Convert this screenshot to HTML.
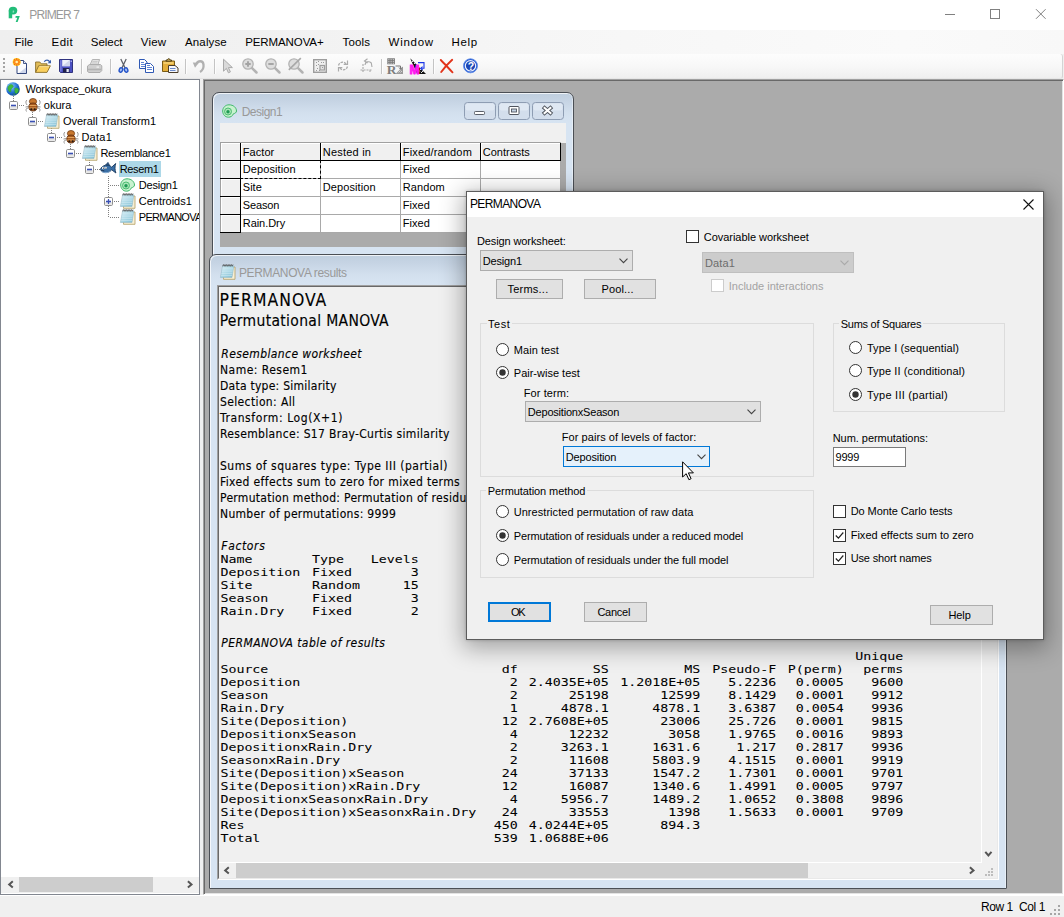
<!DOCTYPE html>
<html><head><meta charset="utf-8"><title>PRIMER 7</title>
<style>
html,body{margin:0;padding:0}
body{width:1064px;height:917px;position:relative;overflow:hidden;background:#f0f0f0;font-family:"Liberation Sans",sans-serif;font-size:12px;color:#000}
.a{position:absolute;white-space:pre;display:block}
svg{position:absolute;overflow:visible}
/* text classes: line-height fixed so baseline offsets are predictable */
.tt{font-size:12px;line-height:14px;letter-spacing:-.9px;color:#999}
.mn{font-size:11.5px;line-height:14px;letter-spacing:-.2px}
.tr{font-size:11px;line-height:13px;letter-spacing:-.23px}
.ct{font-size:12px;line-height:14px;letter-spacing:-.4px;color:#999}
.gd{font-size:11px;line-height:13px;letter-spacing:.1px}
.d{font-size:11px;line-height:13px;letter-spacing:-.13px}
.dt{font-size:12px;line-height:14px;letter-spacing:-.5px}
.h1{font-family:"DejaVu Sans Condensed","DejaVu Sans","Liberation Sans",sans-serif;font-size:17.4px;line-height:20px;letter-spacing:.9px}
.h2{font-family:"DejaVu Sans Condensed","DejaVu Sans","Liberation Sans",sans-serif;font-size:15.5px;line-height:18px;letter-spacing:.28px}
.b{font-family:"DejaVu Sans Condensed","DejaVu Sans","Liberation Sans",sans-serif;font-size:12px;line-height:16px;letter-spacing:.25px}
.i{font-style:italic}
.m{font-family:"DejaVu Sans Mono","Liberation Mono",monospace;font-size:13.29px;line-height:13px;transform-origin:0 11px;transform:scaleY(.73)}
.st{font-size:12px;line-height:14px;letter-spacing:-.45px}
.b,.h1,.h2{-webkit-text-stroke:.13px #000;font-stretch:condensed}
.m{-webkit-text-stroke:.07px #000}

</style></head><body>
<svg width="0" height="0" style="left:0;top:0"><defs><linearGradient id="np" x1="0" y1="0" x2="1" y2="1"><stop offset="0" stop-color="#d6eef5"/><stop offset=".55" stop-color="#a4d4e3"/><stop offset="1" stop-color="#7fbdd3"/></linearGradient></defs></svg>
<div class="a" style="left:0;top:0;width:1064px;height:30px;background:#fff"></div>
<svg style="left:8px;top:6px" width="13" height="17" viewBox="0 0 13 17"><ellipse cx="5" cy="4.600" rx="4.250" ry="3.950" fill="#22bd79"/><path d="M.7 4.500h3.500v7.800h-3.500z" fill="#22bd79"/><path d="M4.700 4.700c.9-.5 1.600-.1 1.500 .9-.1 .9-.8 1.300-1.500 1.200z" fill="#8fe0bd"/><path d="M7.700 10.100h4.100l-2.200 5.800h-1.900l1.600-4.100h-1.900z" fill="#22bd79"/></svg>
<span class="a tt" style="left:29.3px;top:8px;letter-spacing:-0.87px;">PRIMER 7</span>
<svg style="left:940px;top:4px" width="120" height="22" viewBox="0 0 120 22" fill="none" stroke="#808080" stroke-width="1"><path d="M5 10.500h10"/><rect x="50.500" y="5.500" width="9" height="9"/><path d="M96 5.200l9.600 9.600M105.600 5.200l-9.600 9.600"/></svg>
<div class="a" style="left:0;top:30px;width:1064px;height:24px;background:linear-gradient(90deg,#efefef 0,#f1f1f1 25%,#f6f6f6 50%,#fafafa 85%,#f8f8f8 100%)"></div>
<span class="a mn" style="left:14.6px;top:35px;letter-spacing:-0.01px;">File</span>
<span class="a mn" style="left:51.6px;top:35px;letter-spacing:0.39px;">Edit</span>
<span class="a mn" style="left:90.8px;top:35px;letter-spacing:-0.04px;">Select</span>
<span class="a mn" style="left:140.8px;top:35px;letter-spacing:0.18px;">View</span>
<span class="a mn" style="left:185.0px;top:35px;letter-spacing:0.14px;">Analyse</span>
<span class="a mn" style="left:245.2px;top:35px;letter-spacing:-0.10px;">PERMANOVA+</span>
<span class="a mn" style="left:342.6px;top:35px;letter-spacing:0.16px;">Tools</span>
<span class="a mn" style="left:388.6px;top:35px;letter-spacing:0.72px;">Window</span>
<span class="a mn" style="left:451.6px;top:35px;letter-spacing:0.61px;">Help</span>
<div class="a" style="left:0;top:54px;width:1062px;height:24px;background:linear-gradient(#fdfdfd,#f7f7f7 55%,#efefef);border-radius:0 3px 3px 0;border-bottom:1px solid #e6e6e6;border-right:1px solid #d4d4d4"></div>
<svg style="left:3px;top:58px" width="2" height="16"><rect x="0" y="0" width="2" height="2" fill="#a4a4a4"/><rect x="0" y="4" width="2" height="2" fill="#a4a4a4"/><rect x="0" y="8" width="2" height="2" fill="#a4a4a4"/><rect x="0" y="12" width="2" height="2" fill="#a4a4a4"/></svg>
<svg style="left:11px;top:58px" width="17" height="17" viewBox="0 0 17 17"><path d="M6 2.500h6.500l3 3v10h-9.500z" fill="#fcfdff" stroke="#33477d"/><path d="M12.500 2.500v3h3" fill="#e4e9f6" stroke="#33477d" stroke-width=".9"/><path d="M15 9.500v5.500h-7z" fill="#c3cde6" opacity=".8"/><circle cx="5.700" cy="4" r="4" fill="#ffc81e"/><circle cx="5.700" cy="4" r="2.700" fill="#ff8a1c"/><circle cx="5.700" cy="4" r="1.300" fill="#fff1a8"/><circle cx="8.80" cy="4.00" r=".55" fill="#e4421a"/><circle cx="7.90" cy="6.20" r=".55" fill="#e4421a"/><circle cx="5.70" cy="7.10" r=".55" fill="#e4421a"/><circle cx="3.50" cy="6.20" r=".55" fill="#e4421a"/><circle cx="2.60" cy="4.00" r=".55" fill="#e4421a"/><circle cx="3.50" cy="1.80" r=".55" fill="#e4421a"/><circle cx="5.70" cy="0.90" r=".55" fill="#e4421a"/><circle cx="7.90" cy="1.80" r=".55" fill="#e4421a"/></svg>
<svg style="left:35px;top:58px" width="16" height="16" viewBox="0 0 16 16"><path d="M.6 14.400v-10.400h4.200l1.400 1.800h5.800v2.400" fill="#e2bd58" stroke="#8a6f2c" stroke-width=".9"/><path d="M.6 14.400l3-6.600h11.800l-3.400 6.600z" fill="#f9cf5e" stroke="#8a6f2c" stroke-width=".9"/><path d="M4.300 8.600h9.800" stroke="#fde9a8" stroke-width=".8"/><path d="M9.300 3.800c1.300-2.300 4.300-2.300 5.400 .2" fill="none" stroke="#3b61ad" stroke-width="1.300"/><path d="M16 1.700v3.500h-3.300z" fill="#3b61ad"/></svg>
<svg style="left:59px;top:58px" width="14" height="16" viewBox="0 0 14 16"><path d="M.5 1.500h13v13h-12l-1-1z" fill="#4b50c2" stroke="#30337f"/><path d="M1.200 2.200h1.300v11.400h-1.300z" fill="#7f84e0"/><rect x="3.200" y="2" width="7.600" height="6.200" fill="#eef1fa"/><path d="M3.200 8.200l7.600-6.200v6.200z" fill="#cfd5ec"/><rect x="4" y="10" width="6.500" height="4.500" fill="#20224a"/><rect x="7.500" y="11" width="2.300" height="3" fill="#e6e8f6"/><rect x="11.700" y="2.600" width="1" height="1.300" fill="#dfe2ff"/></svg>
<div class="a" style="left:81px;top:59px;width:1px;height:15px;background:#c4c4c4"></div><div class="a" style="left:82px;top:59px;width:1px;height:15px;background:#fdfdfd"></div>
<svg style="left:86px;top:58px" width="17" height="16" viewBox="0 0 17 16"><path d="M4 7l2.400-5.500h7.200l-1.800 5.500z" fill="#e2e2e2" stroke="#b4b4b4"/><path d="M6.500 3.500h5M6 5h5" stroke="#c2c2c2" stroke-width=".7"/><path d="M1.500 8l2-1.500h11l1.300 1.300v4.700l-1.800 2h-11l-1.500-1z" fill="#cfcfcf" stroke="#adadad"/><path d="M2 11.500h13" stroke="#b2b2b2" stroke-width="1.600"/><rect x="10.500" y="8.500" width="2.500" height="1.200" fill="#f3f3f3"/></svg>
<div class="a" style="left:110px;top:59px;width:1px;height:15px;background:#c4c4c4"></div><div class="a" style="left:111px;top:59px;width:1px;height:15px;background:#fdfdfd"></div>
<svg style="left:117px;top:58px" width="13" height="16" viewBox="0 0 13 16"><path d="M3.800 1l4.300 9M9.200 1l-4.300 9" stroke="#5d6068" stroke-width="1.300" fill="none"/><ellipse cx="3.900" cy="12" rx="1.700" ry="2.200" transform="rotate(20 3.900 12)" fill="#a9c2f4" stroke="#2453c8" stroke-width="1.400"/><ellipse cx="9.100" cy="12" rx="1.700" ry="2.200" transform="rotate(-20 9.100 12)" fill="#a9c2f4" stroke="#2453c8" stroke-width="1.400"/></svg>
<svg style="left:139px;top:58px" width="16" height="16" viewBox="0 0 16 16"><path d="M.5 1.500h5l2.500 2.500v6.500h-7.500z" fill="#fff" stroke="#2f59b4"/><path d="M2 4.500h3M2 6.500h4.500M2 8.500h4.500" stroke="#5f85d4"/><path d="M6.500 5.500h5l3 3v6h-8z" fill="#fff" stroke="#2f59b4"/><path d="M8 9.500h5M8 11.500h5M8 7.500h3" stroke="#5f85d4"/></svg>
<svg style="left:162px;top:58px" width="17" height="16" viewBox="0 0 17 16"><path d="M.5 3h12v10.500h-12z" fill="#e3ae3a" stroke="#7a5c17"/><path d="M1.500 4h10v2h-10z" fill="#f6d377" opacity=".8"/><path d="M4 3.200v-1.200h1.500c0-1.800 2.500-1.800 2.500 0h1.500v1.200z" fill="#d7b75e" stroke="#4b3a12" stroke-width=".9"/><path d="M6.500 7.500h6.500l3 2.500v4.500h-9.500z" fill="#f5f7fc" stroke="#4a3d2a"/><path d="M8 10.500h5.500M8 12.500h5.500" stroke="#6a8acb"/></svg>
<div class="a" style="left:185px;top:59px;width:1px;height:15px;background:#c4c4c4"></div><div class="a" style="left:186px;top:59px;width:1px;height:15px;background:#fdfdfd"></div>
<svg style="left:192px;top:58px" width="13" height="15" viewBox="0 0 13 15"><path d="M4.500 6c1-3.500 6.500-4 7 .5 .4 3.500-1 6-3.500 7.500" fill="none" stroke="#b1b1b1" stroke-width="2.300"/><path d="M.8 4.500l6 .3-3.800 4.900z" fill="#b1b1b1"/></svg>
<div class="a" style="left:214px;top:59px;width:1px;height:15px;background:#c4c4c4"></div><div class="a" style="left:215px;top:59px;width:1px;height:15px;background:#fdfdfd"></div>
<svg style="left:222px;top:58px" width="12" height="17" viewBox="0 0 12 17"><path d="M1.500 1.200v12l2.900-2.800 2 4.400 2-.9-2-4.300h4z" fill="#dadada" stroke="#a9a9a9"/></svg>
<svg style="left:242px;top:58px" width="16" height="16" viewBox="0 0 16 16"><path d="M9.800 9.800l4.700 4.700" stroke="#b3b3b3" stroke-width="2.500" stroke-linecap="round"/><circle cx="6" cy="6" r="5.200" fill="#dedede" stroke="#b3b3b3" stroke-width="1.300"/><path d="M3.300 6h5.400M6 3.300v5.400" stroke="#a3a3a3" stroke-width="1.900"/></svg>
<svg style="left:265px;top:58px" width="16" height="16" viewBox="0 0 16 16"><path d="M9.800 9.800l4.700 4.700" stroke="#b3b3b3" stroke-width="2.500" stroke-linecap="round"/><circle cx="6" cy="6" r="5.200" fill="#dedede" stroke="#b3b3b3" stroke-width="1.300"/><path d="M3.300 6h5.400" stroke="#a3a3a3" stroke-width="1.900"/></svg>
<svg style="left:288px;top:58px" width="16" height="16" viewBox="0 0 16 16"><path d="M9.800 9.800l4.700 4.700" stroke="#b3b3b3" stroke-width="2.500" stroke-linecap="round"/><circle cx="6" cy="6" r="5.200" fill="#dedede" stroke="#b3b3b3" stroke-width="1.300"/><path d="M.8 11.800l12-11.600" stroke="#a8a8a8" stroke-width="1.600"/></svg>
<svg style="left:313px;top:59px" width="14" height="14" viewBox="0 0 14 14"><rect x=".7" y=".7" width="12.600" height="12.600" fill="#efefef" stroke="#9d9d9d" stroke-width="1.400"/><rect x="7" y="6.500" width="4.500" height="4.500" fill="#e2e2e2" stroke="#9d9d9d" stroke-width="1.200"/><rect x="3" y="3" width="1" height="1" fill="#9b9b9b"/><rect x="5" y="2" width="1" height="1" fill="#9b9b9b"/><rect x="8" y="3" width="1" height="1" fill="#9b9b9b"/><rect x="3" y="6" width="1" height="1" fill="#9b9b9b"/><rect x="4" y="9" width="1" height="1" fill="#9b9b9b"/><rect x="3" y="11" width="1" height="1" fill="#9b9b9b"/><rect x="6" y="11" width="1" height="1" fill="#9b9b9b"/><rect x="10" y="3" width="1" height="1" fill="#9b9b9b"/><rect x="5" y="5" width="1" height="1" fill="#9b9b9b"/><rect x="9" y="8" width="1" height="1" fill="#9b9b9b"/></svg>
<svg style="left:337px;top:60px" width="12" height="12" viewBox="0 0 12 12"><path d="M1.500 5.500c.8-3.500 5.500-4.500 7.500-1.500M10.500 6.500c-.8 3.500-5.500 4.500-7.500 1.500" fill="none" stroke="#ababab" stroke-width="1.300" stroke-dasharray="2.500 1"/><path d="M10.500 .5v3.800h-3.800M1.500 11.500v-3.800h3.800" fill="none" stroke="#ababab" stroke-width="1.200"/></svg>
<svg style="left:360px;top:58px" width="13" height="15" viewBox="0 0 13 15"><path d="M3 6v8M.5 12h11.500M10 14v-2.500" fill="none" stroke="#a9a9a9" stroke-width="1.100" stroke-dasharray="2 1"/><path d="M5 7c0-3.300 4-4.300 6.300-2l.7 4" fill="none" stroke="#a9a9a9" stroke-width="1.100"/><path d="M7.500 .8l-3 2.200 3 2" fill="none" stroke="#a9a9a9" stroke-width="1.100"/></svg>
<div class="a" style="left:381px;top:59px;width:1px;height:15px;background:#c4c4c4"></div><div class="a" style="left:382px;top:59px;width:1px;height:15px;background:#fdfdfd"></div>
<svg style="left:387px;top:58px" width="16" height="16" viewBox="0 0 16 16"><rect x=".3" y=".3" width="7.600" height="6" fill="#777"/><rect x="1.4" y="1.2" width="1" height="1" fill="#e8e8e8"/><rect x="1.4" y="3.2" width="1" height="1" fill="#e8e8e8"/><rect x="1.4" y="5.2" width="1" height="1" fill="#e8e8e8"/><rect x="3.6" y="1.2" width="1" height="1" fill="#e8e8e8"/><rect x="3.6" y="3.2" width="1" height="1" fill="#e8e8e8"/><rect x="3.6" y="5.2" width="1" height="1" fill="#e8e8e8"/><rect x="5.800000000000001" y="1.2" width="1" height="1" fill="#e8e8e8"/><rect x="5.800000000000001" y="3.2" width="1" height="1" fill="#e8e8e8"/><rect x="5.800000000000001" y="5.2" width="1" height="1" fill="#e8e8e8"/><text x="-.3" y="15.800" font-family="Liberation Serif,serif" font-weight="bold" font-size="13.500" fill="#7e7e7e">R</text><path d="M8.500 16l7.500-7.500v7.500z" fill="#9a9a9a"/><path d="M9.500 14.500l1-1M11.500 14.500l2-2M13.500 14.500l1.500-1.500M12 12l1-1" stroke="#e6e6e6" stroke-width=".8"/><path d="M8.500 8h5v3M12 9.500l1.500 1.700 1.500-1.700" fill="none" stroke="#777" stroke-width="1"/></svg>
<svg style="left:410px;top:58px" width="16" height="16" viewBox="0 0 16 16"><path d="M.2 .2l15.800 15.800h-9z" fill="#111"/><path d="M2 3l1 1M4 5l1 1M6 7l1 1M8 9l1 1M10 11l1 1M12 13l1 1M9 12.500l1 1M11 14l1 1M7 10l1 1" stroke="#fff" stroke-width=".9"/><text x="-.4" y="16" font-family="Liberation Sans,sans-serif" font-weight="bold" font-size="12" fill="#ff18ee" stroke="#ff18ee" stroke-width=".9">M</text><path d="M8 4.600h6v5.700h-2.800" fill="none" stroke="#1a36e8" stroke-width="1.100"/><path d="M12.600 8.600l-1.800 1.700 1.800 1.700" fill="none" stroke="#1a36e8" stroke-width="1.100"/></svg>
<div class="a" style="left:433px;top:59px;width:1px;height:15px;background:#c4c4c4"></div><div class="a" style="left:434px;top:59px;width:1px;height:15px;background:#fdfdfd"></div>
<svg style="left:440px;top:59px" width="14" height="14" viewBox="0 0 14 14"><path d="M.8 1c3.500 3.500 8 8.500 11.700 12.300M12.200 .8c-3.500 3.200-8 8-11 12.200" stroke="#e2331a" stroke-width="1.900" stroke-linecap="round" fill="none"/></svg>
<svg style="left:463px;top:58px" width="15" height="16" viewBox="0 0 15 16"><circle cx="7.500" cy="7.800" r="7" fill="#1f55cf" stroke="#5f8be6" stroke-width=".9"/><circle cx="7.500" cy="7.800" r="5.200" fill="#1b46b5" stroke="#eaf0ff" stroke-width="1.200"/><text x="4.700" y="11.600" font-family="Liberation Sans,sans-serif" font-weight="bold" font-size="10.500" fill="#fff">?</text></svg>
<div class="a" style="left:0;top:895px;width:1064px;height:22px;background:#f0f0f0;border-top:1px solid #fff;box-sizing:border-box"></div>
<span class="a st" style="left:981.0px;top:900px;">Row 1</span>
<span class="a st" style="left:1019.1px;top:900px;">Col 1</span>
<svg style="left:1050px;top:905px" width="11" height="11" fill="#a6a6a6"><rect x="8" y="0" width="2" height="2"/><rect x="4" y="4" width="2" height="2"/><rect x="8" y="4" width="2" height="2"/><rect x="0" y="8" width="2" height="2"/><rect x="4" y="8" width="2" height="2"/><rect x="8" y="8" width="2" height="2"/></svg>
<div class="a" style="left:0;top:79px;width:200px;height:816px;box-sizing:border-box;background:#fff;border:1px solid #828790"></div>
<div class="a" id="treeclip" style="left:1px;top:80px;width:198px;height:798px;overflow:hidden">
<div class="a" style="left:118px;top:81px;width:42px;height:16px;background:#add8e8"></div>
<div class="a" style="left:18px;top:25px;width:6px;height:1px;background:repeating-linear-gradient(90deg,#808080 0 1px,transparent 1px 2px)"></div>
<div class="a" style="left:12px;top:14px;width:1px;height:7px;background:repeating-linear-gradient(#808080 0 1px,transparent 1px 2px)"></div>
<div class="a" style="left:37px;top:41px;width:6px;height:1px;background:repeating-linear-gradient(90deg,#808080 0 1px,transparent 1px 2px)"></div>
<div class="a" style="left:31px;top:30px;width:1px;height:7px;background:repeating-linear-gradient(#808080 0 1px,transparent 1px 2px)"></div>
<div class="a" style="left:56px;top:57px;width:6px;height:1px;background:repeating-linear-gradient(90deg,#808080 0 1px,transparent 1px 2px)"></div>
<div class="a" style="left:50px;top:46px;width:1px;height:7px;background:repeating-linear-gradient(#808080 0 1px,transparent 1px 2px)"></div>
<div class="a" style="left:75px;top:73px;width:6px;height:1px;background:repeating-linear-gradient(90deg,#808080 0 1px,transparent 1px 2px)"></div>
<div class="a" style="left:69px;top:62px;width:1px;height:7px;background:repeating-linear-gradient(#808080 0 1px,transparent 1px 2px)"></div>
<div class="a" style="left:94px;top:89px;width:5px;height:1px;background:repeating-linear-gradient(90deg,#808080 0 1px,transparent 1px 2px)"></div>
<div class="a" style="left:88px;top:78px;width:1px;height:7px;background:repeating-linear-gradient(#808080 0 1px,transparent 1px 2px)"></div>
<div class="a" style="left:109px;top:105px;width:10px;height:1px;background:repeating-linear-gradient(90deg,#808080 0 1px,transparent 1px 2px)"></div>
<div class="a" style="left:113px;top:121px;width:6px;height:1px;background:repeating-linear-gradient(90deg,#808080 0 1px,transparent 1px 2px)"></div>
<div class="a" style="left:109px;top:137px;width:10px;height:1px;background:repeating-linear-gradient(90deg,#808080 0 1px,transparent 1px 2px)"></div>
<div class="a" style="left:107px;top:96px;width:1px;height:21px;background:repeating-linear-gradient(#808080 0 1px,transparent 1px 2px)"></div>
<div class="a" style="left:107px;top:126px;width:1px;height:12px;background:repeating-linear-gradient(#808080 0 1px,transparent 1px 2px)"></div>
<svg style="left:5px;top:2px" width="14" height="14" viewBox="0 0 14 14"><defs><radialGradient id="gl" cx=".35" cy=".3" r=".8"><stop offset="0" stop-color="#8fd0ff"/><stop offset=".6" stop-color="#1f6fd0"/><stop offset="1" stop-color="#0c3f8f"/></radialGradient></defs><circle cx="7" cy="7" r="6.800" fill="url(#gl)"/><path d="M3 3.500c1.500-1.500 3-1 4 0s-.5 2-1.500 3 0 3-1 3.500-2-1.500-2.500-3 .2-2.700 1-3.500zM8.500 6.500c1-1 3-.5 3.800.5s0 3-1 4-2 .5-2.500-1 .7-2.500-.3-3.500zM7 11.500c1 0 2 .8 1.500 1.800" fill="#3fba3f" stroke="#2a8f2a" stroke-width=".4"/></svg>
<span class="a tr" style="left:24.4px;top:3px;letter-spacing:-0.18px;">Workspace_okura</span>
<svg style="left:8px;top:21px" width="9" height="9" viewBox="0 0 9 9"><rect x=".5" y=".5" width="8" height="8" rx="1.200" fill="#fff" stroke="#8e8e8e"/><rect x="1.200" y="5" width="6.600" height="2.800" fill="#e4e4e4"/><path d="M2 4.500h5" stroke="#3a50b4" stroke-width="1.600"/></svg>
<svg style="left:24px;top:17px" width="16" height="16" viewBox="0 0 16 16"><path d="M2 8c-1.500-2-1.500-4 0-5M14 8c1.500-2 1.500-4 0-5M3 11c-2 0-2.500 2-1.500 3.500M13 11c2 0 2.500 2 1.500 3.500M3.500 9.500l-3 .5M12.500 9.500l3 .5" fill="none" stroke="#8b8b8b" stroke-width=".9"/><ellipse cx="8" cy="4.500" rx="3.600" ry="3" fill="#c8772e" stroke="#6e3a12" stroke-width=".8"/><ellipse cx="8" cy="10" rx="4.200" ry="4" fill="#a85a20" stroke="#5e2f0e" stroke-width=".8"/><path d="M4.500 8.500h7M4.300 11h7.400" stroke="#e0a25a" stroke-width="1"/><circle cx="6.300" cy="12.300" r="1.100" fill="#2a1a10"/><circle cx="9.700" cy="12.300" r="1.100" fill="#2a1a10"/></svg>
<span class="a tr" style="left:42.8px;top:19px;letter-spacing:0.02px;">okura</span>
<svg style="left:27px;top:37px" width="9" height="9" viewBox="0 0 9 9"><rect x=".5" y=".5" width="8" height="8" rx="1.200" fill="#fff" stroke="#8e8e8e"/><rect x="1.200" y="5" width="6.600" height="2.800" fill="#e4e4e4"/><path d="M2 4.500h5" stroke="#3a50b4" stroke-width="1.600"/></svg>
<svg style="left:43px;top:33px" width="16" height="16" viewBox="0 0 16 16"><path d="M4 3h11v12.300h-11.500z" fill="#f7f0d6" stroke="#b29d62" stroke-width=".8"/><path d="M2.600 1.800h11.300l-1.900 11.700h-11.600z" fill="url(#np)" stroke="#8fb3c0" stroke-width=".5"/><path d="M2.300 4.200h11M2 6h11M1.700 7.800h11M1.400 9.600h11M1.100 11.400h11" stroke="#e4f4f8" stroke-width=".6" opacity=".8"/><path d="M2.600 2.300l.8-1.800.8 1.800.8-1.800.8 1.800.8-1.800.8 1.800.8-1.800.8 1.800.8-1.800.8 1.800.8-1.800.8 1.800.8-1.800" fill="none" stroke="#4a4a4a" stroke-width=".7"/></svg>
<span class="a tr" style="left:62.0px;top:35px;letter-spacing:-0.03px;">Overall Transform1</span>
<svg style="left:46px;top:53px" width="9" height="9" viewBox="0 0 9 9"><rect x=".5" y=".5" width="8" height="8" rx="1.200" fill="#fff" stroke="#8e8e8e"/><rect x="1.200" y="5" width="6.600" height="2.800" fill="#e4e4e4"/><path d="M2 4.500h5" stroke="#3a50b4" stroke-width="1.600"/></svg>
<svg style="left:62px;top:49px" width="16" height="16" viewBox="0 0 16 16"><path d="M2 8c-1.500-2-1.500-4 0-5M14 8c1.500-2 1.500-4 0-5M3 11c-2 0-2.500 2-1.500 3.500M13 11c2 0 2.500 2 1.500 3.500M3.500 9.500l-3 .5M12.500 9.500l3 .5" fill="none" stroke="#8b8b8b" stroke-width=".9"/><ellipse cx="8" cy="4.500" rx="3.600" ry="3" fill="#c8772e" stroke="#6e3a12" stroke-width=".8"/><ellipse cx="8" cy="10" rx="4.200" ry="4" fill="#a85a20" stroke="#5e2f0e" stroke-width=".8"/><path d="M4.500 8.500h7M4.300 11h7.400" stroke="#e0a25a" stroke-width="1"/><circle cx="6.300" cy="12.300" r="1.100" fill="#2a1a10"/><circle cx="9.700" cy="12.300" r="1.100" fill="#2a1a10"/></svg>
<span class="a tr" style="left:80.4px;top:51px;letter-spacing:0.26px;">Data1</span>
<svg style="left:65px;top:69px" width="9" height="9" viewBox="0 0 9 9"><rect x=".5" y=".5" width="8" height="8" rx="1.200" fill="#fff" stroke="#8e8e8e"/><rect x="1.200" y="5" width="6.600" height="2.800" fill="#e4e4e4"/><path d="M2 4.500h5" stroke="#3a50b4" stroke-width="1.600"/></svg>
<svg style="left:81px;top:65px" width="16" height="16" viewBox="0 0 16 16"><path d="M4 3h11v12.300h-11.500z" fill="#f7f0d6" stroke="#b29d62" stroke-width=".8"/><path d="M2.600 1.800h11.300l-1.900 11.700h-11.600z" fill="url(#np)" stroke="#8fb3c0" stroke-width=".5"/><path d="M2.300 4.200h11M2 6h11M1.700 7.800h11M1.400 9.600h11M1.100 11.400h11" stroke="#e4f4f8" stroke-width=".6" opacity=".8"/><path d="M2.600 2.300l.8-1.800.8 1.800.8-1.800.8 1.800.8-1.800.8 1.800.8-1.800.8 1.800.8-1.800.8 1.800.8-1.800.8 1.800.8-1.800" fill="none" stroke="#4a4a4a" stroke-width=".7"/></svg>
<span class="a tr" style="left:99.4px;top:67px;letter-spacing:-0.27px;">Resemblance1</span>
<svg style="left:84px;top:85px" width="9" height="9" viewBox="0 0 9 9"><rect x=".5" y=".5" width="8" height="8" rx="1.200" fill="#fff" stroke="#8e8e8e"/><rect x="1.200" y="5" width="6.600" height="2.800" fill="#e4e4e4"/><path d="M2 4.500h5" stroke="#3a50b4" stroke-width="1.600"/></svg>
<svg style="left:99px;top:82px" width="16" height="14" viewBox="0 0 16 14"><path d="M.4 7.500c1.500-4.500 8-6 11.300-2.300l4-3.700c-1 3-.9 6.500 .2 9.500l-4.200-3.200c-3 3.800-9.300 3.700-11.300-.3z" fill="#3a6fa6" stroke="#1b3a5e" stroke-width=".9"/><path d="M5.500 3l2.500-2.800 1.800 3.300z" fill="#274f7d" stroke="#1b3a5e" stroke-width=".5"/><path d="M1.500 9.300c2.500 2 6.500 1.800 9-.3" fill="none" stroke="#8db6de" stroke-width="1"/><path d="M1.200 8.600h3" stroke="#16304f" stroke-width=".8"/><circle cx="3.300" cy="6" r="1.300" fill="#fff"/><circle cx="5.800" cy="5.800" r="1.100" fill="#fff"/><circle cx="3.500" cy="6.100" r=".55" fill="#111"/><circle cx="5.900" cy="5.900" r=".5" fill="#111"/></svg>
<span class="a tr" style="left:118.8px;top:83px;letter-spacing:-0.39px;">Resem1</span>
<svg style="left:119px;top:98px" width="15" height="14" viewBox="0 0 15 14"><path d="M7 .8c4.500 0 7.500 3 7.500 6.200 0 1.500-1.500 2.500-3 2.700-1 2.500-3 3.500-5 3.500-3.500 0-5.800-2.800-5.800-6.200s2.800-6.200 6.300-6.200z" fill="#c8f2cf" stroke="#3fb86a" stroke-width="1"/><circle cx="6" cy="7.500" r="3.500" fill="#a9e6b6" stroke="#3fb86a" stroke-width=".9"/><circle cx="6" cy="7.700" r="1.700" fill="#1f9a55"/></svg>
<span class="a tr" style="left:137.8px;top:99px;letter-spacing:-0.23px;">Design1</span>
<svg style="left:103px;top:117px" width="9" height="9" viewBox="0 0 9 9"><rect x=".5" y=".5" width="8" height="8" rx="1.200" fill="#fff" stroke="#8e8e8e"/><rect x="1.200" y="5" width="6.600" height="2.800" fill="#e4e4e4"/><path d="M2 4.500h5" stroke="#3a50b4" stroke-width="1.600"/><path d="M4.500 2v5" stroke="#3a50b4" stroke-width="1.200"/></svg>
<svg style="left:119px;top:113px" width="16" height="16" viewBox="0 0 16 16"><path d="M4 3h11v12.300h-11.500z" fill="#f7f0d6" stroke="#b29d62" stroke-width=".8"/><path d="M2.600 1.800h11.300l-1.900 11.700h-11.600z" fill="url(#np)" stroke="#8fb3c0" stroke-width=".5"/><path d="M2.300 4.200h11M2 6h11M1.700 7.800h11M1.400 9.600h11M1.100 11.400h11" stroke="#e4f4f8" stroke-width=".6" opacity=".8"/><path d="M2.600 2.300l.8-1.800.8 1.800.8-1.800.8 1.800.8-1.800.8 1.800.8-1.800.8 1.800.8-1.800.8 1.800.8-1.800.8 1.800.8-1.800" fill="none" stroke="#4a4a4a" stroke-width=".7"/></svg>
<span class="a tr" style="left:137.8px;top:115px;letter-spacing:-0.02px;">Centroids1</span>
<svg style="left:119px;top:129px" width="16" height="16" viewBox="0 0 16 16"><path d="M4 3h11v12.300h-11.500z" fill="#f7f0d6" stroke="#b29d62" stroke-width=".8"/><path d="M2.600 1.800h11.300l-1.900 11.700h-11.600z" fill="url(#np)" stroke="#8fb3c0" stroke-width=".5"/><path d="M2.300 4.200h11M2 6h11M1.700 7.800h11M1.400 9.600h11M1.100 11.400h11" stroke="#e4f4f8" stroke-width=".6" opacity=".8"/><path d="M2.600 2.300l.8-1.800.8 1.800.8-1.800.8 1.800.8-1.800.8 1.800.8-1.800.8 1.800.8-1.800.8 1.800.8-1.800.8 1.800.8-1.800" fill="none" stroke="#4a4a4a" stroke-width=".7"/></svg>
<span class="a tr" style="left:137.8px;top:131px;letter-spacing:-.75px;">PERMANOVA1</span>
</div>
<div class="a" style="left:1px;top:877px;width:198px;height:16px;background:#f0f0f0"></div>
<div class="a" style="left:19px;top:877px;width:134px;height:15px;background:#cdcdcd"></div>
<svg style="left:7px;top:880px" width="8" height="9" fill="none" stroke="#555" stroke-width="2"><path d="M5.800 1.300l-3.600 3.100 3.600 3.100"/></svg>
<svg style="left:186px;top:880px" width="8" height="9" fill="none" stroke="#555" stroke-width="2"><path d="M1.900 1.300l3.600 3.100-3.600 3.100"/></svg>
<div class="a" style="left:203px;top:79px;width:861px;height:816px;box-sizing:border-box;background:#ababab;border-left:1px solid #a0a0a0;border-top:1px solid #a0a0a0;border-right:1px solid #fff;border-bottom:1px solid #fff;box-shadow:inset 1px 1px 0 #696969,inset -1px -1px 0 #e3e3e3"></div>
<div class="a" style="left:212px;top:92px;width:362px;height:166px;box-sizing:border-box;border:1px solid #4b4f55;border-radius:7px 7px 1px 1px;background:linear-gradient(#bfcede 0,#c6d4e4 8px,#d3e0ee 20px,#d7e4f2 30px,#d7e4f2 100%);box-shadow:inset 1px 1px 0 rgba(255,255,255,.75),inset -1px 0 0 rgba(255,255,255,.4)"></div>
<svg style="left:222px;top:104px" width="15" height="14" viewBox="0 0 15 14"><path d="M7 .8c4.500 0 7.500 3 7.500 6.200 0 1.500-1.500 2.500-3 2.700-1 2.500-3 3.500-5 3.500-3.500 0-5.800-2.800-5.800-6.200s2.800-6.200 6.300-6.200z" fill="#c8f2cf" stroke="#3fb86a" stroke-width="1"/><circle cx="6" cy="7.500" r="3.500" fill="#a9e6b6" stroke="#3fb86a" stroke-width=".9"/><circle cx="6" cy="7.700" r="1.700" fill="#1f9a55"/></svg>
<span class="a ct" style="left:241.7px;top:105px;letter-spacing:-0.51px;">Design1</span>
<svg style="left:464px;top:102px" width="32" height="18" viewBox="0 0 32 18"><rect x=".5" y=".5" width="31" height="17" rx="3" fill="#d3deec" stroke="#8e9db3"/><rect x="1.500" y="1.500" width="29" height="7" rx="2" fill="#e2eaf5" opacity=".8"/><rect x="10.500" y="9.500" width="10" height="3" rx=".8" fill="#fff" stroke="#5a5f68"/></svg>
<svg style="left:498px;top:102px" width="32" height="18" viewBox="0 0 32 18"><rect x=".5" y=".5" width="31" height="17" rx="3" fill="#d3deec" stroke="#8e9db3"/><rect x="1.500" y="1.500" width="29" height="7" rx="2" fill="#e2eaf5" opacity=".8"/><rect x="11" y="4.500" width="10" height="8" rx="1" fill="#fff" stroke="#50555e"/><rect x="13.500" y="7" width="5" height="3" fill="#c3d2e4" stroke="#50555e" stroke-width=".9"/></svg>
<svg style="left:532px;top:102px" width="32" height="18" viewBox="0 0 32 18"><rect x=".5" y=".5" width="31" height="17" rx="3" fill="#d3deec" stroke="#8e9db3"/><rect x="1.500" y="1.500" width="29" height="7" rx="2" fill="#e2eaf5" opacity=".8"/><path d="M12.600 6l5.800 5M18.400 6l-5.800 5" stroke="#50555e" stroke-width="4" stroke-linecap="square"/><path d="M12.600 6l5.800 5M18.400 6l-5.800 5" stroke="#fff" stroke-width="2.100" stroke-linecap="square"/></svg>
<div class="a" style="left:220px;top:123px;width:346px;height:124px;background:#f0f0f0"></div>
<div class="a" style="left:220px;top:143px;width:346px;height:104px;background:#ababab"></div>
<div class="a" style="left:220px;top:143px;width:340px;height:90px;background:#fff"></div>
<div class="a" style="left:220px;top:143px;width:340px;height:17px;background:#f0f0f0"></div>
<div class="a" style="left:220px;top:143px;width:20px;height:90px;background:#f0f0f0"></div>
<div class="a" style="left:241px;top:178px;width:320px;height:1px;background:#a9a9a9"></div>
<div class="a" style="left:241px;top:196px;width:320px;height:1px;background:#a9a9a9"></div>
<div class="a" style="left:241px;top:214px;width:320px;height:1px;background:#a9a9a9"></div>
<div class="a" style="left:241px;top:232px;width:320px;height:1px;background:#a9a9a9"></div>
<div class="a" style="left:320px;top:161px;width:1px;height:72px;background:#a9a9a9"></div>
<div class="a" style="left:400px;top:161px;width:1px;height:72px;background:#a9a9a9"></div>
<div class="a" style="left:480px;top:161px;width:1px;height:72px;background:#a9a9a9"></div>
<div class="a" style="left:560px;top:161px;width:1px;height:72px;background:#a9a9a9"></div>
<div class="a" style="left:220px;top:142px;width:341px;height:1px;background:#a0a0a0"></div>
<div class="a" style="left:220px;top:142px;width:1px;height:91px;background:#a0a0a0"></div>
<div class="a" style="left:221px;top:143px;width:339px;height:1px;background:#fff"></div>
<div class="a" style="left:221px;top:143px;width:1px;height:90px;background:#fff"></div>
<div class="a" style="left:241px;top:144px;width:1px;height:16px;background:#fff"></div>
<div class="a" style="left:321px;top:144px;width:1px;height:16px;background:#fff"></div>
<div class="a" style="left:401px;top:144px;width:1px;height:16px;background:#fff"></div>
<div class="a" style="left:481px;top:144px;width:1px;height:16px;background:#fff"></div>
<div class="a" style="left:222px;top:161px;width:18px;height:1px;background:#fff"></div>
<div class="a" style="left:222px;top:179px;width:18px;height:1px;background:#fff"></div>
<div class="a" style="left:222px;top:197px;width:18px;height:1px;background:#fff"></div>
<div class="a" style="left:222px;top:215px;width:18px;height:1px;background:#fff"></div>
<div class="a" style="left:220px;top:160px;width:341px;height:1px;background:#000"></div>
<div class="a" style="left:240px;top:143px;width:1px;height:90px;background:#000"></div>
<div class="a" style="left:320px;top:143px;width:1px;height:18px;background:#000"></div>
<div class="a" style="left:400px;top:143px;width:1px;height:18px;background:#000"></div>
<div class="a" style="left:480px;top:143px;width:1px;height:18px;background:#000"></div>
<div class="a" style="left:560px;top:143px;width:1px;height:18px;background:#000"></div>
<div class="a" style="left:220px;top:178px;width:21px;height:1px;background:#000"></div>
<div class="a" style="left:220px;top:196px;width:21px;height:1px;background:#000"></div>
<div class="a" style="left:220px;top:214px;width:21px;height:1px;background:#000"></div>
<div class="a" style="left:220px;top:232px;width:21px;height:1px;background:#000"></div>
<div class="a" style="left:240px;top:160px;width:81px;height:19px;box-sizing:border-box;border:1px dashed #000;border-top:none;border-left:none"></div>
<span class="a gd" style="left:242.8px;top:146px;letter-spacing:0.06px;">Factor</span>
<span class="a gd" style="left:322.8px;top:146px;letter-spacing:0.21px;">Nested in</span>
<span class="a gd" style="left:402.8px;top:146px;letter-spacing:0.16px;">Fixed/random</span>
<span class="a gd" style="left:482.8px;top:146px;letter-spacing:-0.01px;">Contrasts</span>
<span class="a gd" style="left:242.8px;top:163px;letter-spacing:0.09px;">Deposition</span>
<span class="a gd" style="left:402.8px;top:163px;letter-spacing:0.02px;">Fixed</span>
<span class="a gd" style="left:242.8px;top:181px;letter-spacing:0.01px;">Site</span>
<span class="a gd" style="left:322.8px;top:181px;letter-spacing:0.09px;">Deposition</span>
<span class="a gd" style="left:402.8px;top:181px;letter-spacing:0.08px;">Random</span>
<span class="a gd" style="left:242.8px;top:199px;letter-spacing:-0.16px;">Season</span>
<span class="a gd" style="left:402.8px;top:199px;letter-spacing:0.02px;">Fixed</span>
<span class="a gd" style="left:242.8px;top:217px;letter-spacing:-0.06px;">Rain.Dry</span>
<span class="a gd" style="left:402.8px;top:217px;letter-spacing:0.02px;">Fixed</span>
<div class="a" style="left:209px;top:254px;width:798px;height:635px;box-sizing:border-box;border:1px solid #4b4f55;border-radius:7px 7px 1px 1px;background:linear-gradient(#bfcede 0,#c6d4e4 8px,#d3e0ee 20px,#d7e4f2 30px,#d7e4f2 100%);box-shadow:inset 1px 1px 0 rgba(255,255,255,.75),inset -1px 0 0 rgba(255,255,255,.4)"></div>
<svg style="left:220px;top:264px" width="16" height="16" viewBox="0 0 16 16"><path d="M4 3h11v12.300h-11.500z" fill="#f7f0d6" stroke="#b29d62" stroke-width=".8"/><path d="M2.600 1.800h11.300l-1.900 11.700h-11.600z" fill="url(#np)" stroke="#8fb3c0" stroke-width=".5"/><path d="M2.300 4.200h11M2 6h11M1.700 7.800h11M1.400 9.600h11M1.100 11.400h11" stroke="#e4f4f8" stroke-width=".6" opacity=".8"/><path d="M2.600 2.300l.8-1.800.8 1.800.8-1.800.8 1.800.8-1.800.8 1.800.8-1.800.8 1.800.8-1.800.8 1.800.8-1.800.8 1.800.8-1.800" fill="none" stroke="#4a4a4a" stroke-width=".7"/></svg>
<span class="a ct" style="left:238.9px;top:266px;letter-spacing:-0.35px;">PERMANOVA results</span>
<div class="a" style="left:217px;top:285px;width:782px;height:595px;box-sizing:border-box;background:#f0f0f0;border:1px solid #a0a0a0;border-right-color:#fff;border-bottom-color:#fff"></div>
<div class="a" style="left:218px;top:286px;width:780px;height:593px;box-sizing:border-box;border:1px solid #696969;border-right-color:#e9e9e9;border-bottom-color:#e9e9e9"></div>
<div class="a" style="left:219px;top:862px;width:763px;height:1px;background:#fff"></div>
<div class="a" style="left:981px;top:287px;width:1px;height:576px;background:#fff"></div>
<span class="a h1" style="left:219.6px;top:290px;letter-spacing:1.04px;">PERMANOVA</span>
<span class="a h2" style="left:219.7px;top:312px;letter-spacing:0.33px;">Permutational MANOVA</span>
<span class="a b i" style="left:221.3px;top:346px;letter-spacing:0.39px;">Resemblance worksheet</span>
<span class="a b" style="left:220.0px;top:362px;letter-spacing:0.48px;">Name: Resem1</span>
<span class="a b" style="left:220.0px;top:378px;letter-spacing:0.25px;">Data type: Similarity</span>
<span class="a b" style="left:220.0px;top:394px;letter-spacing:0.37px;">Selection: All</span>
<span class="a b" style="left:220.0px;top:410px;letter-spacing:0.60px;">Transform: Log(X+1)</span>
<span class="a b" style="left:220.0px;top:426px;letter-spacing:0.33px;">Resemblance: S17 Bray-Curtis similarity</span>
<span class="a b" style="left:220.0px;top:458px;letter-spacing:0.49px;">Sums of squares type: Type III (partial)</span>
<span class="a b" style="left:220.0px;top:474px;letter-spacing:0.38px;">Fixed effects sum to zero for mixed terms</span>
<span class="a b" style="left:220.0px;top:490px;letter-spacing:0.30px;">Permutation method: Permutation of residuals under a reduced model</span>
<span class="a b" style="left:220.0px;top:506px;letter-spacing:0.31px;">Number of permutations: 9999</span>
<span class="a b i" style="left:221.3px;top:538px;letter-spacing:0.64px;">Factors</span>
<span class="a b i" style="left:221.3px;top:635px;letter-spacing:0.44px;">PERMANOVA table of results</span>
<span class="a m" style="left:220.4px;top:552px;">Name</span>
<span class="a m" style="left:312px;top:552px;">Type</span>
<span class="a m" style="left:370.8px;top:552px;">Levels</span>
<span class="a m" style="left:220.4px;top:565px;">Deposition</span>
<span class="a m" style="left:312px;top:565px;">Fixed</span>
<span class="a m" style="left:410.8px;top:565px;">3</span>
<span class="a m" style="left:220.4px;top:578px;">Site</span>
<span class="a m" style="left:312px;top:578px;">Random</span>
<span class="a m" style="left:402.8px;top:578px;">15</span>
<span class="a m" style="left:220.4px;top:591px;">Season</span>
<span class="a m" style="left:312px;top:591px;">Fixed</span>
<span class="a m" style="left:410.8px;top:591px;">3</span>
<span class="a m" style="left:220.4px;top:604px;">Rain.Dry</span>
<span class="a m" style="left:312px;top:604px;">Fixed</span>
<span class="a m" style="left:410.8px;top:604px;">2</span>
<span class="a m" style="left:855.3px;top:649px;">Unique</span>
<span class="a m" style="left:220.4px;top:662px;">Source</span>
<span class="a m" style="left:501.8px;top:662px;">df</span>
<span class="a m" style="left:592.8px;top:662px;">SS</span>
<span class="a m" style="left:684.3px;top:662px;">MS</span>
<span class="a m" style="left:712.3px;top:662px;">Pseudo-F</span>
<span class="a m" style="left:787.8px;top:662px;">P(perm)</span>
<span class="a m" style="left:863.3px;top:662px;">perms</span>
<span class="a m" style="left:220.4px;top:675px;">Deposition</span>
<span class="a m" style="left:509.8px;top:675px;">2</span>
<span class="a m" style="left:528.8px;top:675px;">2.4035E+05</span>
<span class="a m" style="left:620.3px;top:675px;">1.2018E+05</span>
<span class="a m" style="left:728.3px;top:675px;">5.2236</span>
<span class="a m" style="left:795.8px;top:675px;">0.0005</span>
<span class="a m" style="left:871.3px;top:675px;">9600</span>
<span class="a m" style="left:220.4px;top:688px;">Season</span>
<span class="a m" style="left:509.8px;top:688px;">2</span>
<span class="a m" style="left:568.8px;top:688px;">25198</span>
<span class="a m" style="left:660.3px;top:688px;">12599</span>
<span class="a m" style="left:728.3px;top:688px;">8.1429</span>
<span class="a m" style="left:795.8px;top:688px;">0.0001</span>
<span class="a m" style="left:871.3px;top:688px;">9912</span>
<span class="a m" style="left:220.4px;top:701px;">Rain.Dry</span>
<span class="a m" style="left:509.8px;top:701px;">1</span>
<span class="a m" style="left:560.8px;top:701px;">4878.1</span>
<span class="a m" style="left:652.3px;top:701px;">4878.1</span>
<span class="a m" style="left:728.3px;top:701px;">3.6387</span>
<span class="a m" style="left:795.8px;top:701px;">0.0054</span>
<span class="a m" style="left:871.3px;top:701px;">9936</span>
<span class="a m" style="left:220.4px;top:714px;">Site(Deposition)</span>
<span class="a m" style="left:501.8px;top:714px;">12</span>
<span class="a m" style="left:528.8px;top:714px;">2.7608E+05</span>
<span class="a m" style="left:660.3px;top:714px;">23006</span>
<span class="a m" style="left:728.3px;top:714px;">25.726</span>
<span class="a m" style="left:795.8px;top:714px;">0.0001</span>
<span class="a m" style="left:871.3px;top:714px;">9815</span>
<span class="a m" style="left:220.4px;top:727px;">DepositionxSeason</span>
<span class="a m" style="left:509.8px;top:727px;">4</span>
<span class="a m" style="left:568.8px;top:727px;">12232</span>
<span class="a m" style="left:668.3px;top:727px;">3058</span>
<span class="a m" style="left:728.3px;top:727px;">1.9765</span>
<span class="a m" style="left:795.8px;top:727px;">0.0016</span>
<span class="a m" style="left:871.3px;top:727px;">9893</span>
<span class="a m" style="left:220.4px;top:740px;">DepositionxRain.Dry</span>
<span class="a m" style="left:509.8px;top:740px;">2</span>
<span class="a m" style="left:560.8px;top:740px;">3263.1</span>
<span class="a m" style="left:652.3px;top:740px;">1631.6</span>
<span class="a m" style="left:736.3px;top:740px;">1.217</span>
<span class="a m" style="left:795.8px;top:740px;">0.2817</span>
<span class="a m" style="left:871.3px;top:740px;">9936</span>
<span class="a m" style="left:220.4px;top:753px;">SeasonxRain.Dry</span>
<span class="a m" style="left:509.8px;top:753px;">2</span>
<span class="a m" style="left:568.8px;top:753px;">11608</span>
<span class="a m" style="left:652.3px;top:753px;">5803.9</span>
<span class="a m" style="left:728.3px;top:753px;">4.1515</span>
<span class="a m" style="left:795.8px;top:753px;">0.0001</span>
<span class="a m" style="left:871.3px;top:753px;">9919</span>
<span class="a m" style="left:220.4px;top:766px;">Site(Deposition)xSeason</span>
<span class="a m" style="left:501.8px;top:766px;">24</span>
<span class="a m" style="left:568.8px;top:766px;">37133</span>
<span class="a m" style="left:652.3px;top:766px;">1547.2</span>
<span class="a m" style="left:728.3px;top:766px;">1.7301</span>
<span class="a m" style="left:795.8px;top:766px;">0.0001</span>
<span class="a m" style="left:871.3px;top:766px;">9701</span>
<span class="a m" style="left:220.4px;top:779px;">Site(Deposition)xRain.Dry</span>
<span class="a m" style="left:501.8px;top:779px;">12</span>
<span class="a m" style="left:568.8px;top:779px;">16087</span>
<span class="a m" style="left:652.3px;top:779px;">1340.6</span>
<span class="a m" style="left:728.3px;top:779px;">1.4991</span>
<span class="a m" style="left:795.8px;top:779px;">0.0005</span>
<span class="a m" style="left:871.3px;top:779px;">9797</span>
<span class="a m" style="left:220.4px;top:792px;">DepositionxSeasonxRain.Dry</span>
<span class="a m" style="left:509.8px;top:792px;">4</span>
<span class="a m" style="left:560.8px;top:792px;">5956.7</span>
<span class="a m" style="left:652.3px;top:792px;">1489.2</span>
<span class="a m" style="left:728.3px;top:792px;">1.0652</span>
<span class="a m" style="left:795.8px;top:792px;">0.3808</span>
<span class="a m" style="left:871.3px;top:792px;">9896</span>
<span class="a m" style="left:220.4px;top:805px;">Site(Deposition)xSeasonxRain.Dry</span>
<span class="a m" style="left:501.8px;top:805px;">24</span>
<span class="a m" style="left:568.8px;top:805px;">33553</span>
<span class="a m" style="left:668.3px;top:805px;">1398</span>
<span class="a m" style="left:728.3px;top:805px;">1.5633</span>
<span class="a m" style="left:795.8px;top:805px;">0.0001</span>
<span class="a m" style="left:871.3px;top:805px;">9709</span>
<span class="a m" style="left:220.4px;top:818px;">Res</span>
<span class="a m" style="left:493.8px;top:818px;">450</span>
<span class="a m" style="left:528.8px;top:818px;">4.0244E+05</span>
<span class="a m" style="left:660.3px;top:818px;">894.3</span>
<span class="a m" style="left:220.4px;top:831px;">Total</span>
<span class="a m" style="left:493.8px;top:831px;">539</span>
<span class="a m" style="left:528.8px;top:831px;">1.0688E+06</span>
<div class="a" style="left:236px;top:863px;width:572px;height:15px;background:#cdcdcd"></div>
<svg style="left:223px;top:866px" width="8" height="9" fill="none" stroke="#555" stroke-width="2"><path d="M5.800 1.300l-3.600 3.100 3.600 3.100"/></svg>
<svg style="left:968px;top:866px" width="8" height="9" fill="none" stroke="#555" stroke-width="2"><path d="M1.900 1.300l3.600 3.100-3.600 3.100"/></svg>
<svg style="left:984px;top:850px" width="9" height="8" fill="none" stroke="#555" stroke-width="2"><path d="M1.300 1.900l3.100 3.600 3.100-3.600"/></svg>
<svg style="left:985px;top:868px" width="10" height="10" fill="#bdbdbd"><rect x="6" y="0" width="2" height="2"/><rect x="3" y="3" width="2" height="2"/><rect x="6" y="3" width="2" height="2"/><rect x="0" y="6" width="2" height="2"/><rect x="3" y="6" width="2" height="2"/><rect x="6" y="6" width="2" height="2"/></svg>
<div class="a" style="left:466px;top:191px;width:578px;height:449px;box-sizing:border-box;background:#f0f0f0;border:1px solid #5c5c5c;box-shadow:0 5px 22px 3px rgba(0,0,0,.33),0 0 3px rgba(0,0,0,.22)"></div>
<div class="a" style="left:467px;top:192px;width:576px;height:25px;background:#fff"></div>
<span class="a dt" style="left:469.9px;top:197px;letter-spacing:-0.60px;">PERMANOVA</span>
<svg style="left:1023px;top:199px" width="11" height="11" fill="none" stroke="#111" stroke-width="1.100"><path d="M.5 .5l10 10M10.500 .5l-10 10"/></svg>
<span class="a d" style="left:477.0px;top:235px;letter-spacing:-0.11px;">Design worksheet:</span>
<div class="a" style="left:480px;top:250px;width:153px;height:21px;box-sizing:border-box;background:#e1e1e1;border:1px solid #adadad"></div>
<span class="a d" style="left:482.8px;top:255px;letter-spacing:-0.19px;">Design1</span>
<svg style="left:619.2px;top:258.0px" width="9" height="6" fill="none" stroke="#444" stroke-width="1.100"><path d="M.5 .6l4 4 4-4"/></svg>
<div class="a" style="left:496px;top:279px;width:67px;height:20px;box-sizing:border-box;background:#e1e1e1;border:1px solid #adadad"></div><span class="a d" style="left:507.4px;top:283px;letter-spacing:0.24px;">Terms...</span>
<div class="a" style="left:584px;top:279px;width:72px;height:20px;box-sizing:border-box;background:#e1e1e1;border:1px solid #adadad"></div><span class="a d" style="left:601.4px;top:283px;letter-spacing:0.17px;">Pool...</span>
<svg style="left:686px;top:230px" width="13" height="13" viewBox="0 0 13 13"><rect x=".5" y=".5" width="12" height="12" fill="#fff" stroke="#333"/></svg>
<span class="a d" style="left:703.8px;top:231px;letter-spacing:-0.04px;">Covariable worksheet</span>
<div class="a" style="left:702px;top:252px;width:152px;height:21px;box-sizing:border-box;background:#cccccc;border:1px solid #bfbfbf"></div>
<span class="a d" style="left:705.0px;top:257px;color:#6d6d6d;letter-spacing:0.11px;">Data1</span>
<svg style="left:840.2px;top:260.0px" width="9" height="6" fill="none" stroke="#a9a9a9" stroke-width="1.100"><path d="M.5 .6l4 4 4-4"/></svg>
<svg style="left:711px;top:279px" width="13" height="13" viewBox="0 0 13 13"><rect x=".5" y=".5" width="12" height="12" fill="#fff" stroke="#cccccc"/></svg>
<span class="a d" style="left:728.8px;top:280px;color:#a3a3a3;letter-spacing:-0.01px;">Include interactions</span>
<div class="a" style="left:480px;top:323px;width:334px;height:154px;box-sizing:border-box;border:1px solid #dcdcdc"></div><div class="a" style="left:486.6px;top:321px;width:25px;height:5px;background:#f0f0f0"></div><span class="a d" style="left:488.0px;top:318px;letter-spacing:0.54px;">Test</span>
<svg style="left:496px;top:343px" width="13" height="13" viewBox="0 0 13 13"><circle cx="6.500" cy="6.500" r="6" fill="#fff" stroke="#333"/></svg>
<span class="a d" style="left:513.8px;top:344px;letter-spacing:0.04px;">Main test</span>
<svg style="left:496px;top:366px" width="13" height="13" viewBox="0 0 13 13"><circle cx="6.500" cy="6.500" r="6" fill="#fff" stroke="#333"/><circle cx="6.500" cy="6.500" r="3.200" fill="#333"/></svg>
<span class="a d" style="left:513.8px;top:367px;letter-spacing:-0.00px;">Pair-wise test</span>
<span class="a d" style="left:523.8px;top:387px;letter-spacing:0.07px;">For term:</span>
<div class="a" style="left:525px;top:401px;width:236px;height:21px;box-sizing:border-box;background:#e1e1e1;border:1px solid #adadad"></div>
<span class="a d" style="left:527.8px;top:406px;letter-spacing:-0.20px;">DepositionxSeason</span>
<svg style="left:747.1px;top:409.0px" width="9" height="6" fill="none" stroke="#444" stroke-width="1.100"><path d="M.5 .6l4 4 4-4"/></svg>
<span class="a d" style="left:561.8px;top:431px;letter-spacing:0.06px;">For pairs of levels of factor:</span>
<div class="a" style="left:563px;top:446px;width:147px;height:21px;box-sizing:border-box;background:#e5f1fb;border:1px solid #0078d7"></div>
<span class="a d" style="left:565.8px;top:451px;letter-spacing:-0.15px;">Deposition</span>
<svg style="left:696.5px;top:454.0px" width="9" height="6" fill="none" stroke="#444" stroke-width="1.100"><path d="M.5 .6l4 4 4-4"/></svg>
<div class="a" style="left:833px;top:323px;width:172px;height:89px;box-sizing:border-box;border:1px solid #dcdcdc"></div><div class="a" style="left:839.4px;top:321px;width:84px;height:5px;background:#f0f0f0"></div><span class="a d" style="left:840.8px;top:318px;letter-spacing:-0.27px;">Sums of Squares</span>
<svg style="left:849px;top:341px" width="13" height="13" viewBox="0 0 13 13"><circle cx="6.500" cy="6.500" r="6" fill="#fff" stroke="#333"/></svg>
<span class="a d" style="left:866.9px;top:342px;letter-spacing:0.08px;">Type I (sequential)</span>
<svg style="left:849px;top:364px" width="13" height="13" viewBox="0 0 13 13"><circle cx="6.500" cy="6.500" r="6" fill="#fff" stroke="#333"/></svg>
<span class="a d" style="left:866.9px;top:365px;letter-spacing:0.10px;">Type II (conditional)</span>
<svg style="left:849px;top:388px" width="13" height="13" viewBox="0 0 13 13"><circle cx="6.500" cy="6.500" r="6" fill="#fff" stroke="#333"/><circle cx="6.500" cy="6.500" r="3.200" fill="#333"/></svg>
<span class="a d" style="left:866.9px;top:389px;letter-spacing:0.26px;">Type III (partial)</span>
<span class="a d" style="left:832.7px;top:432px;letter-spacing:-0.04px;">Num. permutations:</span>
<div class="a" style="left:833px;top:447px;width:73px;height:20px;box-sizing:border-box;background:#fff;border:1px solid #7a7a7a"></div>
<span class="a d" style="left:835.4px;top:451px;">9999</span>
<div class="a" style="left:480px;top:490px;width:334px;height:88px;box-sizing:border-box;border:1px solid #dcdcdc"></div><div class="a" style="left:486.4px;top:488px;width:101px;height:5px;background:#f0f0f0"></div><span class="a d" style="left:487.8px;top:485px;letter-spacing:-0.09px;">Permutation method</span>
<svg style="left:496px;top:505px" width="13" height="13" viewBox="0 0 13 13"><circle cx="6.500" cy="6.500" r="6" fill="#fff" stroke="#333"/></svg>
<span class="a d" style="left:513.7px;top:506px;letter-spacing:0.05px;">Unrestricted permutation of raw data</span>
<svg style="left:496px;top:529px" width="13" height="13" viewBox="0 0 13 13"><circle cx="6.500" cy="6.500" r="6" fill="#fff" stroke="#333"/><circle cx="6.500" cy="6.500" r="3.200" fill="#333"/></svg>
<span class="a d" style="left:513.7px;top:530px;letter-spacing:-0.12px;">Permutation of residuals under a reduced model</span>
<svg style="left:496px;top:553px" width="13" height="13" viewBox="0 0 13 13"><circle cx="6.500" cy="6.500" r="6" fill="#fff" stroke="#333"/></svg>
<span class="a d" style="left:513.7px;top:554px;letter-spacing:-0.08px;">Permutation of residuals under the full model</span>
<svg style="left:833px;top:505px" width="13" height="13" viewBox="0 0 13 13"><rect x=".5" y=".5" width="12" height="12" fill="#fff" stroke="#333"/></svg>
<span class="a d" style="left:850.7px;top:505px;letter-spacing:-0.08px;">Do Monte Carlo tests</span>
<svg style="left:833px;top:529px" width="13" height="13" viewBox="0 0 13 13"><rect x=".5" y=".5" width="12" height="12" fill="#fff" stroke="#333"/><path d="M2.800 6.500l2.600 2.700 4.900-5.700" fill="none" stroke="#222" stroke-width="1.200"/></svg>
<span class="a d" style="left:850.7px;top:529px;letter-spacing:0.01px;">Fixed effects sum to zero</span>
<svg style="left:833px;top:552px" width="13" height="13" viewBox="0 0 13 13"><rect x=".5" y=".5" width="12" height="12" fill="#fff" stroke="#333"/><path d="M2.800 6.500l2.600 2.700 4.900-5.700" fill="none" stroke="#222" stroke-width="1.200"/></svg>
<span class="a d" style="left:850.7px;top:552px;letter-spacing:-0.15px;">Use short names</span>
<div class="a" style="left:488px;top:602px;width:63px;height:20px;box-sizing:border-box;background:#e1e1e1;border:2px solid #0078d7"></div><span class="a d" style="left:511.0px;top:606px;letter-spacing:-1.20px;">OK</span>
<div class="a" style="left:584px;top:602px;width:63px;height:20px;box-sizing:border-box;background:#e1e1e1;border:1px solid #adadad"></div><span class="a d" style="left:597.4px;top:606px;letter-spacing:-0.25px;">Cancel</span>
<div class="a" style="left:930px;top:605px;width:63px;height:20px;box-sizing:border-box;background:#e1e1e1;border:1px solid #adadad"></div><span class="a d" style="left:948.4px;top:609px;letter-spacing:-0.08px;">Help</span>
<svg style="left:682px;top:461px" width="13" height="20" viewBox="0 0 13 20"><path d="M.6 .8v15.200l3.600-3.300 2.700 6 2.200-1-2.700-5.800h5z" fill="#fff" stroke="#000" stroke-width="1" stroke-linejoin="round"/></svg>
</body></html>
